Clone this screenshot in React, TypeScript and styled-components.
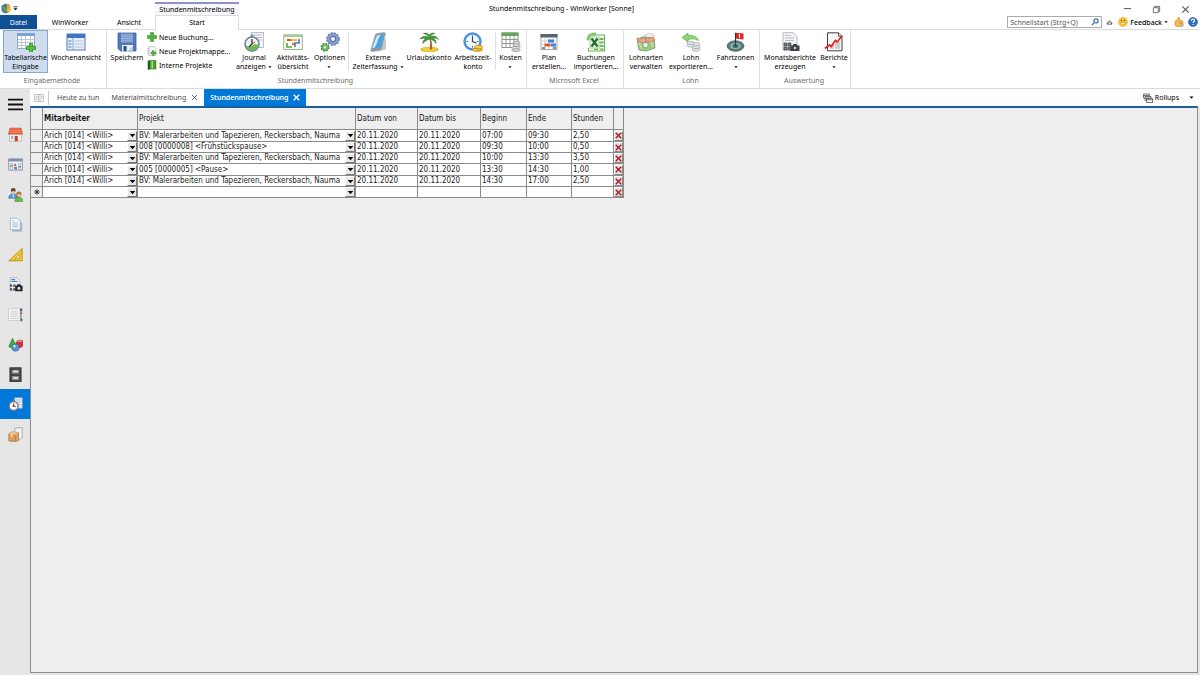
import React from "react";
import styled, { createGlobalStyle, css } from "styled-components";

const Global = createGlobalStyle`
  *, *::before, *::after { box-sizing: border-box; }
  html, body { margin: 0; padding: 0; }
  body {
    background: #fff;
    color: #000;
    font-family: "Noto Sans", "Open Sans", sans-serif;
    font-size: 7px;
    line-height: 9px;
  }
  button, input, select {
    font: inherit;
    color: inherit;
    margin: 0;
    padding: 0;
    border: 0;
    background: none;
    border-radius: 0;
  }
  svg { display: block; flex: none; }
`;

/* ---------- icons ---------- */

const shapes: Record<string, React.ReactNode> = {
  tableAdd: (
    <>
      <rect x="1.5" y="1.5" width="17" height="15" fill="#fff" stroke="#8fa6c4" />
      <rect x="1" y="1" width="18" height="3" fill="#7fa2d6" />
      <path d="M5.5 4v12M9.5 4v12M14.5 4v12M2 7.5h16M2 10.5h16M2 13.5h16" stroke="#a9bdd6" strokeWidth=".8" />
      <path d="M13.5 11.5h3v3h3v3h-3v3h-3v-3h-3v-3h3z" fill="#4fc236" stroke="#23801b" strokeWidth=".7" />
    </>
  ),
  week: (
    <>
      <rect x="1" y="2" width="18" height="16" fill="#e8effa" stroke="#5379b5" />
      <rect x="1" y="2" width="18" height="4" fill="#3f73c4" />
      <path d="M7 6v12" stroke="#88a5d4" />
      <path d="M2.5 9h3M2.5 12h3M2.5 15h3" stroke="#4d78bd" />
      <path d="M8.5 9h9M8.5 12h9M8.5 15h9" stroke="#b4c7e4" />
    </>
  ),
  save: (
    <>
      <path d="M1 1h18v18H3.5L1 16.500z" fill="#5579b8" stroke="#3c5f9f" strokeWidth=".8" />
      <rect x="4" y="1.500" width="12" height="9" fill="#7f9fd0" />
      <path d="M4 4h12M4 6.500h12M4 9h12" stroke="#9db7de" strokeWidth=".8" />
      <rect x="5" y="13" width="11" height="6" fill="#e9edf4" />
      <rect x="6.5" y="14" width="3" height="5" fill="#2b4a80" />
      <path d="M11 19l5-5v5z" fill="#b9c6da" />
    </>
  ),
  plus: <path d="M7 1h6v6h6v6h-6v6H7v-6H1V7h6z" fill="#4fb53c" stroke="#2a7a22" />,
  folderNew: (
    <>
      <path d="M4 1h10l4 4v14H4z" fill="#f4f6f9" stroke="#98a3b3" />
      <path d="M4 4H1.5v2H4M4 9H1.5v2H4M4 14H1.5v2H4" fill="none" stroke="#98a3b3" />
      <path d="M11 9h3v3h4v4h-4v3h-3v-3H8v-4h3z" fill="#4fb53c" stroke="#2a7a22" strokeWidth=".8" />
    </>
  ),
  book: (
    <>
      <path d="M2 2l4-1h12v17H6l-4 1z" fill="#4aa52e" stroke="#25631a" />
      <path d="M2 2l4-1v17l-4 1z" fill="#1f5a17" />
      <path d="M9 2h3v15H9z" fill="#a4dc7c" />
    </>
  ),
  journal: (
    <>
      <rect x="7.5" y=".5" width="12" height="15" fill="#f5f6f8" stroke="#a9b0ba" strokeWidth=".8" />
      <path d="M10 3h8M12 5.5h6M14 8h4" stroke="#b6bdc8" />
      <circle cx="8" cy="12" r="7" fill="#eef4f8" stroke="#6b7f93" strokeWidth="1.6" />
      <path d="M1.500 13.500a7 7 0 0 0 13.500-.5l-4-1-5 3z" fill="#6fb85b" />
      <path d="M8 7v5l-3 3" fill="none" stroke="#222" strokeWidth="1.2" />
      <path d="M8 12l3-2" stroke="#d22" />
      <rect x="6.5" y="2.5" width="3" height="2.5" fill="#7f8b99" />
    </>
  ),
  activity: (
    <>
      <rect x=".7" y="3" width="18.6" height="14.5" fill="#fdfdf6" stroke="#9fb58e" />
      <rect x=".7" y="2.500" width="18.6" height="2.5" fill="#a8c8a0" />
      <path d="M4 8h4" stroke="#d8402c" strokeWidth="1.8" />
      <path d="M8 8h6" stroke="#efb51f" strokeWidth="1.8" />
      <path d="M16 7v4h-4v4" fill="none" stroke="#3b7fd0" strokeWidth="1.6" />
      <path d="M4 11v4h5" fill="none" stroke="#50a83d" strokeWidth="1.6" />
      <path d="M9 12h3" stroke="#d8402c" strokeWidth="1.6" />
    </>
  ),
  gears: (
    <>
      <circle cx="13" cy="7" r="6" fill="#8ea3d1" stroke="#7088bd" strokeWidth="1.8" strokeDasharray="2 1.14" />
      <circle cx="13" cy="7" r="5.4" fill="#8ea3d1" stroke="#6a80b4" strokeWidth=".6" />
      <circle cx="13" cy="7" r="2.6" fill="#f4f6fb" stroke="#5b71a8" strokeWidth="1.2" />
      <circle cx="5" cy="15.3" r="3.6" fill="#58a84b" stroke="#35762c" strokeWidth="1.6" strokeDasharray="1.6 1.23" />
      <circle cx="5" cy="15.3" r="3.2" fill="#6bb75c" />
      <circle cx="5" cy="15.3" r="1.3" fill="#d4efcd" />
    </>
  ),
  phone: (
    <>
      <path d="M9 1.500l7-1c1 0 1.500.5 1.300 1.500L14 17c-.3 1-.8 1.500-1.800 1.600L4 19.500c-1 0-1.400-.6-1.200-1.500L7 3.500c.4-1.200 1-1.900 2-2z" fill="#8a95a3" stroke="#a9b3bf" strokeWidth=".8" />
      <path d="M9 3.500l6.500-.8-3.300 12.500-8 .8z" fill="#3ea6f0" />
      <path d="M9 3.500l4-.5c-4 4-3 8-6.500 12.800l-2.300.2z" fill="#d3ecfd" />
      <path d="M16 8l2-2v11l-4 2z" fill="#c3cad3" />
    </>
  ),
  palm: (
    <>
      <ellipse cx="10.5" cy="17.5" rx="9" ry="2.3" fill="#f3cf3d" stroke="#c99d1c" strokeWidth=".6" />
      <path d="M10 6c1.5 4 1.5 7 .5 11.5h2.7C13.5 13 12.8 9 11.5 6z" fill="#a5682a" />
      <path d="M10.500 6C7 3 3.500 4 .8 7c3-1 5-1 6 0-2 .5-3 2-3 4.500C6 9 8 8 10.500 7c3 .5 5 2 6.500 4.500 0-3-1-4.500-3-5 2-.8 4-.3 5.500 1C18 4 14 3 11.500 5 12 3 14 1.500 16 1.500c-3-1.200-5 0-5.500 2C9.500 1.500 7 .5 4.500 1.500 7.500 2 9 3.500 10.500 6z" fill="#3d9a32" stroke="#267020" strokeWidth=".5" />
    </>
  ),
  clock: (
    <>
      <circle cx="9.5" cy="9.5" r="8" fill="#f4f9fe" stroke="#4c92d6" strokeWidth="2.4" />
      <path d="M9.5 3.5v1.5M9.5 14v1.5M3.5 9.5H5M14 9.5h1.5" stroke="#567" />
      <path d="M9.5 4.5v5l4 1.5" fill="none" stroke="#274c79" strokeWidth="1.2" />
      <ellipse cx="15.5" cy="17.5" rx="4" ry="1.8" fill="#f2b91d" stroke="#b58210" strokeWidth=".7" />
      <ellipse cx="15.5" cy="15" rx="4" ry="1.8" fill="#f9d24a" stroke="#b58210" strokeWidth=".7" />
      <ellipse cx="12" cy="17.8" rx="2.6" ry="1.5" fill="#f9d24a" stroke="#b58210" strokeWidth=".7" />
    </>
  ),
  costs: (
    <>
      <rect x="1" y="1" width="16" height="14.5" fill="#fff" stroke="#8f9a8c" />
      <rect x=".5" y=".5" width="17" height="3.5" fill="#6aa35a" />
      <path d="M5 4v11M9 4v11M13 4v11M1 7.5h16M1 11.5h16" stroke="#858f82" strokeWidth=".9" />
      <g fill="#d7d9dc" stroke="#8a8e94" strokeWidth=".7">
        <ellipse cx="15" cy="18" rx="4.3" ry="1.6" />
        <ellipse cx="15" cy="15.5" rx="4" ry="1.6" />
        <ellipse cx="15.5" cy="13" rx="3.7" ry="1.6" />
        <ellipse cx="15.8" cy="10.5" rx="3.2" ry="1.5" />
      </g>
    </>
  ),
  plan: (
    <>
      <rect x="2" y="2.5" width="16" height="15" fill="#fff" stroke="#a1a8b3" />
      <rect x="1.5" y="2" width="17" height="3.5" fill="#5a6472" />
      <path d="M6 6v11M10 6v11M14 6v11M2 9h16M2 13h16" stroke="#c3c9d2" strokeWidth=".8" />
      <path d="M9 7.5h6v3H9z" fill="#3d86d6" />
      <path d="M5.5 11.5h6v3h-6z" fill="#e2552c" />
      <path d="M12 11.5h5v3h-5z" fill="#3d86d6" />
      <path d="M3 15h3v2H3zM14 15h3v2h-3z" fill="#7f9a70" />
    </>
  ),
  excel: (
    <>
      <path d="M6 3h12.5v16H2.5v-3" fill="#f4faf2" stroke="#6fb35c" strokeWidth="1.2" />
      <path d="M13.5 6h4v2h-4zM13.5 9.5h4v2h-4zM13.5 13h4v2h-4zM8 16.5h4v1.5H8zM13.5 16.5h4V18h-4z" fill="#6fb45a" />
      <path d="M4 5h9v11H4z" fill="#eaf5e6" stroke="#8cc47b" strokeWidth=".7" />
      <path d="M5.5 6.5l6 8M11.5 6.5l-6 8" stroke="#1f6b2c" strokeWidth="2.2" />
      <path d="M1 8c0-5 3-7.500 9-7l-1 2.200C5 3 3.500 4.500 3 8z" fill="#8ed072" stroke="#5ba743" strokeWidth=".5" />
    </>
  ),
  wageTypes: (
    <>
      <path d="M4 6l9-5 5 2-1 6z" fill="#f3f3ee" stroke="#b8c0b5" strokeWidth=".7" />
      <path d="M1 7l7-2 10 1 1 10-9 3-7-1z" fill="#9acb88" stroke="#6aa35d" strokeWidth=".8" />
      <path d="M1 6l5 1 3-2 3 2 5-2 2 3-5 2-3-1-3 2-6-2z" fill="#eda58b" stroke="#c8745a" strokeWidth=".6" />
      <circle cx="9.5" cy="13" r="2.8" fill="#e2efd8" stroke="#5f9a52" strokeWidth=".7" />
      <path d="M3 11l3 6M15 10l2 5" stroke="#f0c9b6" strokeWidth="1.5" />
      <path d="M9.5 5.5v5" stroke="#c8745a" />
    </>
  ),
  wageExport: (
    <>
      <path d="M1 5.500L7 1v2.500c5-.5 9 1 10.500 5C14.500 6.500 11 6.500 7 7.500V10z" fill="#8fd472" stroke="#5eab4c" strokeWidth=".7" />
      <g fill="#e6e8eb" stroke="#9a9fa6" strokeWidth=".7">
        <ellipse cx="15" cy="17.5" rx="4" ry="1.7" />
        <ellipse cx="15" cy="15" rx="4" ry="1.7" />
        <ellipse cx="15" cy="12.3" rx="4" ry="1.7" />
        <ellipse cx="9.5" cy="13.5" rx="3.5" ry="1.6" />
        <ellipse cx="9.5" cy="11" rx="3.5" ry="1.6" />
      </g>
    </>
  ),
  zones: (
    <>
      <ellipse cx="9.5" cy="14" rx="8.5" ry="5.3" fill="#56799a" stroke="#3d5a77" strokeWidth=".7" />
      <ellipse cx="9.5" cy="14" rx="5.8" ry="3.6" fill="#8fbf7d" stroke="#4a7440" strokeWidth=".6" />
      <ellipse cx="9.5" cy="14" rx="3" ry="1.9" fill="#3d5f93" />
      <path d="M9.5 14V.8" stroke="#333" strokeWidth="1.1" />
      <path d="M10 .8l7.5.8v6l-7.5-.8z" fill="#d8262a" />
      <path d="M13.5 2.3v4M12.5 3l1-.8" stroke="#fff" />
    </>
  ),
  monthly: (
    <>
      <path d="M3 .7h10l4 4V18H3z" fill="#f2f3f5" stroke="#a6abb3" strokeWidth=".8" />
      <path d="M5 3.5h6M5 6h9M5 8.5h9" stroke="#b9bec6" strokeWidth="1" />
      <path d="M4 11h3v3H4zM8 11h3v3H8zM4 15h3v3H4zM8 15h3v3H8z" fill="#777d86" stroke="#3f444c" strokeWidth=".7" />
      <path d="M10.5 13.5h2l1-1.5h3l1 1.5h2v5.5h-9z" fill="#3e4248" />
      <circle cx="15" cy="16" r="1.8" fill="#d4d9df" stroke="#111" strokeWidth=".6" />
    </>
  ),
  reports: (
    <>
      <path d="M3.5.8h11l3.5 3.5v14.5H3.5z" fill="#f6f7f9" stroke="#3b3f46" strokeWidth="1" />
      <path d="M14.5.8v3.5H18" fill="#cfd4dc" stroke="#3b3f46" strokeWidth=".8" />
      <path d="M6 12h4v5H6zM11 10h5v7h-5z" fill="#dcc9cb" />
      <path d="M.8 16.500l4.500-3.500 2 1.500 4-6 2 1.500 5-6.500" fill="none" stroke="#e01f1f" strokeWidth="1.6" />
    </>
  ),
  house: (
    <>
      <path d="M2 8.5h16V19H2z" fill="#f1efec" stroke="#a9a29a" strokeWidth=".7" />
      <path d="M2.5 1.5h15l2 8H.5z" fill="#ea6440" stroke="#b8452a" strokeWidth=".7" />
      <path d="M2 5h16M1.5 7.5h17" stroke="#f7a284" strokeWidth=".7" />
      <path d="M9 12h4v7H9z" fill="#b8452a" />
      <path d="M4 12h3v4H4z" fill="#9fb2c5" />
    </>
  ),
  calendar: (
    <>
      <rect x="1" y="2.5" width="18" height="15" fill="#f3f5f8" stroke="#76859a" />
      <rect x="1" y="2.5" width="18" height="3.5" fill="#8092ac" />
      <path d="M3 8.5h3v8H3zM14 8.5h3v8h-3z" fill="none" stroke="#9fadc0" />
      <path d="M8 9h3v3H8z" fill="#cb6b5b" />
      <path d="M8 13h4v3.5H8zM3 11h3v2H3zM14 12h3v2h-3z" fill="#73839b" />
    </>
  ),
  people: (
    <>
      <circle cx="7" cy="4.5" r="3.3" fill="#6d4427" />
      <path d="M5 5.5h4.5v2.3L7.5 9 5 7.5z" fill="#f0c59c" />
      <path d="M1 15c0-4 2-6 6-6s6 2 6 6z" fill="#5b8fd6" stroke="#3c69a8" strokeWidth=".7" />
      <path d="M7 9v5" stroke="#fff" strokeWidth="1.3" />
      <circle cx="14.5" cy="9.5" r="3.5" fill="#b0743a" />
      <path d="M12.7 9.5H17v2.3l-2.2 1.4-2.1-1.4z" fill="#f5d0aa" />
      <path d="M9 19.3c0-4 2-5.8 5.5-5.8s5 1.8 5 5.8z" fill="#62bd49" stroke="#37862a" strokeWidth=".7" />
    </>
  ),
  doc: (
    <>
      <path d="M5.5 4h9l4.5 4v11.5H5.5z" fill="#a8bccf" />
      <path d="M3 1.5h9.5l4 4V17H3z" fill="#f1f6fb" stroke="#8ba4bd" strokeWidth=".9" />
      <path d="M5.5 5h3M5.5 8h8M5.5 10.5h8M5.5 13h8" stroke="#96aec6" />
    </>
  ),
  ruler: (
    <>
      <path d="M19 1.5v17H1z" fill="#f5c92c" stroke="#a8821a" strokeWidth=".9" />
      <path d="M15.5 9.5v5.5H9.5z" fill="#e9e9e9" stroke="#a8821a" strokeWidth=".8" />
      <path d="M4 17v1M7 17v1M10 17v1M13 17v1M17.5 5H19M17.5 8H19" stroke="#7d5f10" strokeWidth=".7" />
    </>
  ),
  qrcam: (
    <>
      <path d="M3 1h9l4 4v12H3z" fill="#e9eef5" stroke="#98a6b8" strokeWidth=".8" />
      <path d="M4.5 3.5h5M4.5 6h8" stroke="#4c7ebc" strokeWidth="1.6" />
      <path d="M2.5 10h3v3h-3zM7 10h3v3H7zM2.5 15h3v3h-3zM7 15h3v3H7z" fill="#4a4f57" />
      <path d="M9.5 11.5h2l1-2h4l1 2h2V19h-10z" fill="#26292e" />
      <circle cx="14.5" cy="15" r="2.5" fill="#dfe4ea" stroke="#000" strokeWidth=".7" />
    </>
  ),
  list: (
    <>
      <rect x="1" y="2.5" width="15" height="15.5" fill="#fbfbfb" stroke="#b6bac0" strokeWidth=".8" />
      <path d="M3 5.5h11M3 8h11M3 10.5h11M3 13h11M3 15.5h11" stroke="#b3b8bf" strokeWidth=".9" />
      <path d="M16 2h3v4h-3z" fill="#4d5e7d" />
      <path d="M16 7h3v3h-3z" fill="#a5655f" />
      <path d="M16 11h2.5v3H16z" fill="#86919f" />
      <path d="M16.5 15H19v4h-2.5z" fill="#4d5e7d" />
    </>
  ),
  solids: (
    <>
      <path d="M6 1.5L11.5 13C8 15.5 3.5 15 1 12.5z" fill="#3fae3a" stroke="#22761f" strokeWidth=".7" />
      <path d="M11 6.5l2-2h6.5v7.5l-2 2H11z" fill="#d92c30" stroke="#96191c" strokeWidth=".7" />
      <path d="M11 6.5l2-2h6.5l-2 2z" fill="#f58a82" />
      <circle cx="10" cy="14" r="5" fill="#5b92d4" stroke="#2d5b99" strokeWidth=".7" />
      <circle cx="8.5" cy="12.3" r="1.7" fill="#cfe3f8" />
    </>
  ),
  cabinet: (
    <>
      <rect x="2.5" y="1" width="15" height="18.5" fill="#4a4c50" stroke="#2c2d30" />
      <rect x="4.5" y="3" width="11" height="6.5" fill="#8b8d91" stroke="#2c2d30" strokeWidth=".8" />
      <rect x="4.5" y="11.5" width="11" height="6.5" fill="#8b8d91" stroke="#2c2d30" strokeWidth=".8" />
      <path d="M7 5h6v2H7zM7 13.5h6v2H7z" fill="#f2f2f2" />
    </>
  ),
  time: (
    <>
      <path d="M9 1h10v14H9z" fill="#e6ebf1" stroke="#a5b6c8" strokeWidth=".8" />
      <path d="M11 4h6M13 7h4M14 10h3" stroke="#9fb2c7" />
      <circle cx="7.5" cy="12" r="6" fill="#f6f8fa" stroke="#6d7b8a" strokeWidth="1.8" />
      <path d="M7.5 8.5V12l2.8 1" fill="none" stroke="#333" strokeWidth="1.2" />
      <circle cx="7.5" cy="12" r="1.4" fill="#c93535" />
      <path d="M6 3.5h3v2H6z" fill="#6d7b8a" />
    </>
  ),
  parcel: (
    <>
      <path d="M9 1.5l10-1v14l-4 2-6-1z" fill="#edf0f4" stroke="#8f98a4" strokeWidth=".9" />
      <path d="M1 9l4-2.5 9 1V18l-4 1.8L1 18.5z" fill="#dca05c" stroke="#a26a2c" strokeWidth=".8" />
      <path d="M1 9l8.5 1.2L14 7.5l-9-1z" fill="#f3c88f" />
      <path d="M9.5 10.2V19.5" stroke="#a26a2c" strokeWidth=".8" />
      <path d="M4 9.5l1.8.3V13L4 12.7z" fill="#fff0d8" />
    </>
  ),
  app: (
    <>
      <path d="M1 5l7-4 6 3v13l-7 2-6-4z" fill="#3d79b8" />
      <path d="M8 3l6-1v14l-5 3z" fill="#1f4c84" />
      <path d="M10 2l7 2v9l-7 5z" fill="#e9ad27" />
      <path d="M3 8l5 8 3-1-4-9z" fill="#66a83e" />
      <path d="M12 12h7l-4 7z" fill="#eecb55" />
    </>
  ),
  caret: <path d="M2 6h16l-8 9z" fill="currentColor" />,
  overflow: <path d="M2 2h16v3H2zM2 9h16l-8 8z" fill="currentColor" />,
  minimize: <path d="M2 8h16" stroke="currentColor" strokeWidth="2.2" />,
  restore: <path d="M3 6h11v11H3zM6 6V3h11v11h-3" fill="none" stroke="currentColor" strokeWidth="1.8" />,
  cross: <path d="M3 3l14 14M17 3L3 17" stroke="currentColor" strokeWidth="2.400" />,
  crossBold: <path d="M2 2l16 16M18 2L2 18" stroke="currentColor" strokeWidth="3.8" />,
  search: <path d="M12.5 2a5 5 0 1 1 0 10.5 5 5 0 0 1 0-10.5M9 11l-7 7" fill="none" stroke="#2b5f9f" strokeWidth="2.8" />,
  collapse: <path d="M3 14V11l7-6 7 6v3l-7-5zM3 15h14" fill="none" stroke="#444" strokeWidth="2" />,
  smile: (
    <>
      <circle cx="10" cy="10" r="9" fill="#fbc92f" stroke="#d99a13" />
      <path d="M5 11c1 5 9 5 10 0z" fill="#fff" stroke="#b5780f" />
      <circle cx="7" cy="7" r="1.4" fill="#6b4307" />
      <circle cx="13" cy="7" r="1.4" fill="#6b4307" />
    </>
  ),
  thumb: (
    <>
      <path d="M2 8l4-1 2-6h3v6h5l2 2v8l-4 2H6l-4-2z" fill="#f5b84d" stroke="#d18f2c" strokeWidth="1.2" />
      <path d="M10 10h7M10 13h7" stroke="#d18f2c" />
      <path d="M14 14h5v5h-5z" fill="#a8b1bd" />
    </>
  ),
  help: (
    <>
      <circle cx="10" cy="10" r="9" fill="#2a6fc0" stroke="#174a8a" />
      <path d="M6.8 7.500c0-4.500 6.700-4 6.400-.4-.2 2-3 2.200-3 5" fill="none" stroke="#fff" strokeWidth="2.3" />
      <path d="M9 13.8h2.4v2.4H9z" fill="#fff" />
    </>
  ),
  rollups: (
    <>
      <path d="M1 2h12v3H1zM1 5v5h3M4 7h12v3H4zM4 10v5h3" fill="#fff" stroke="#444" strokeWidth="1.5" />
      <path d="M7 11h12v8H7zM7 13.5h12" fill="#fff" stroke="#444" strokeWidth="1.5" />
    </>
  ),
  panes: (
    <>
      <path d="M1 3h18v14H1z" fill="#fafafa" stroke="#b5b5b5" strokeWidth="1.5" />
      <path d="M9 3v14M12 3v14M3 7h4M3 10h4M3 13h4M14 7h3M14 10h3" stroke="#b5b5b5" strokeWidth="1.5" />
    </>
  ),
  menu: <path d="M0 3.5h20M0 10h20M0 16.5h20" stroke="#111" strokeWidth="2.6" />,
  star: <path d="M10 3v14M3 10h14M5 5l10 10M15 5L5 15" stroke="#222" strokeWidth="2" />,
};

const Icon = ({ name, size = 20 }: { name: string; size?: number }) => (
  <svg width={size} height={size} viewBox="0 0 20 20" aria-hidden="true">
    {shapes[name]}
  </svg>
);

/* ---------- window frame ---------- */

const Window = styled.div`
  display: flex;
  flex-direction: column;
  min-height: 100vh;
`;

const TitleBar = styled.header`
  display: grid;
  grid-template-columns: 155px 84px 1fr auto;
  height: 15px;
`;

const QuickAccess = styled.div`
  display: flex;
  align-items: center;
  gap: 1px;
  padding-left: 1px;
`;

const ContextHeader = styled.div`
  margin-top: 2px;
  border-top: 2px solid #8f94c6;
  background: #f7f7fc;
  line-height: 12px;
  text-align: center;
  white-space: nowrap;
`;

const WindowTitle = styled.h1`
  margin: 0;
  padding-left: 250px;
  font-size: 7px;
  font-weight: 400;
  line-height: 17px;
`;

const WindowControls = styled.div`
  display: flex;
  align-items: center;
  gap: 20px;
  padding: 1px 10px 0 0;
  color: #555;
`;

const IconButton = styled.button`
  display: flex;
  align-items: center;
  justify-content: center;
`;

const MenuBar = styled.nav`
  display: flex;
  height: 15px;
  border-bottom: 1px solid #dcdcdc;
`;

const MenuTab = styled.button<{ $width: number; $kind?: "file" | "active" }>`
  width: ${(p) => p.$width}px;
  height: 14px;
  text-align: center;
  ${(p) =>
    p.$kind === "file" &&
    css`
      background: #0f4f94;
      color: #fff;
    `}
  ${(p) =>
    p.$kind === "active" &&
    css`
      height: 15px;
      padding-bottom: 2px;
      border: 1px solid #dcdcdc;
      border-bottom: 0;
      background: #fff;
    `}
`;

const MenuTools = styled.div`
  display: flex;
  align-items: center;
  gap: 4px;
  margin-left: auto;
  padding-right: 2px;
`;

const SearchBox = styled.label`
  display: flex;
  align-items: center;
  width: 95px;
  height: 12px;
  padding: 0 2px;
  border: 1px solid #ababab;
  input {
    flex: 1;
    min-width: 0;
    height: 10px;
    outline: 0;
  }
  input::placeholder {
    color: #555;
    opacity: 1;
  }
`;

const Feedback = styled.button`
  display: flex;
  align-items: center;
  gap: 2px;
  padding: 0 2px 0 1px;
  font-weight: 500;
`;

/* ---------- ribbon ---------- */

const Ribbon = styled.div`
  display: flex;
  height: 59px;
  border-bottom: 1px solid #dcdcdc;
`;

const Group = styled.section`
  display: flex;
  flex-direction: column;
  border-right: 1px solid #e0e0e0;
  padding: 0 2px 0 0;
`;

const GroupItems = styled.div<{ $indent: number }>`
  display: flex;
  height: 43px;
  padding-left: ${(p) => p.$indent}px;
`;

const GroupLabel = styled.h2`
  margin: 0;
  padding-top: 3px;
  color: #6c6c6c;
  font-size: 7px;
  font-weight: 400;
  line-height: 10px;
  text-align: center;
`;

const BigButton = styled.button<{ $width: number; $on?: boolean }>`
  display: flex;
  flex-direction: column;
  align-items: center;
  gap: 1px;
  width: ${(p) => p.$width}px;
  padding-top: 2px;
  white-space: nowrap;
  ${(p) =>
    p.$on &&
    css`
      background: #cfdcee;
      box-shadow: inset 0 0 0 1px #86a8d2;
    `}
`;

const BigLabel = styled.span`
  display: flex;
  flex-direction: column;
  align-items: center;
  line-height: 9px;
`;

const LabelLine = styled.span`
  display: flex;
  align-items: center;
  gap: 2px;
  min-height: 9px;
`;

const Divider = styled.span`
  flex: none;
  width: 1px;
  height: 38px;
  margin: 2px 1px;
  background: #e0e0e0;
`;

const SmallColumn = styled.div`
  display: flex;
  flex-direction: column;
  width: 87px;
`;

const SmallButton = styled.button`
  display: flex;
  align-items: center;
  gap: 2px;
  height: 14px;
  white-space: nowrap;
`;

type Action = { icon: string; width: number; lines: string[]; caret?: boolean; on?: boolean };
type Entry = Action | "divider" | "small";

const groups: { label: string; indent: number; items: Entry[] }[] = [
  {
    label: "Eingabemethode",
    indent: 3,
    items: [
      { icon: "tableAdd", width: 45, lines: ["Tabellarische", "Eingabe"], on: true },
      { icon: "week", width: 56, lines: ["Wochenansicht"] },
    ],
  },
  {
    label: "Stundenmitschreibung",
    indent: 0,
    items: [
      { icon: "save", width: 40, lines: ["Speichern"] },
      "small",
      { icon: "journal", width: 40, lines: ["Journal", "anzeigen"], caret: true },
      { icon: "activity", width: 38, lines: ["Aktivitäts-", "übersicht"] },
      { icon: "gears", width: 35, lines: ["Optionen", ""], caret: true },
      "divider",
      { icon: "phone", width: 56, lines: ["Externe", "Zeiterfassung"], caret: true },
      { icon: "palm", width: 46, lines: ["Urlaubskonto"] },
      { icon: "clock", width: 42, lines: ["Arbeitszeit-", "konto"] },
      "divider",
      { icon: "costs", width: 27, lines: ["Kosten", ""], caret: true },
    ],
  },
  {
    label: "Microsoft Excel",
    indent: 0,
    items: [
      { icon: "plan", width: 44, lines: ["Plan", "erstellen..."] },
      { icon: "excel", width: 50, lines: ["Buchungen", "importieren..."] },
    ],
  },
  {
    label: "Lohn",
    indent: 0,
    items: [
      { icon: "wageTypes", width: 44, lines: ["Lohnarten", "verwalten"] },
      { icon: "wageExport", width: 46, lines: ["Lohn", "exportieren..."] },
      { icon: "zones", width: 43, lines: ["Fahrtzonen", ""], caret: true },
    ],
  },
  {
    label: "Auswertung",
    indent: 0,
    items: [
      { icon: "monthly", width: 60, lines: ["Monatsberichte", "erzeugen"] },
      { icon: "reports", width: 28, lines: ["Berichte", ""], caret: true },
    ],
  },
];

const smallActions = [
  { icon: "plus", label: "Neue Buchung..." },
  { icon: "folderNew", label: "Neue Projektmappe..." },
  { icon: "book", label: "Interne Projekte" },
];

const RibbonEntry = ({ entry }: { entry: Entry }) => {
  if (entry === "divider") return <Divider />;
  if (entry === "small")
    return (
      <SmallColumn>
        {smallActions.map((a) => (
          <SmallButton key={a.label}>
            <Icon name={a.icon} size={10} />
            {a.label}
          </SmallButton>
        ))}
      </SmallColumn>
    );
  return (
    <BigButton $width={entry.width} $on={entry.on}>
      <Icon name={entry.icon} />
      <BigLabel>
        {entry.lines.map((line, i) => (
          <LabelLine key={i}>
            {line}
            {entry.caret && i === entry.lines.length - 1 && <Icon name="caret" size={4} />}
          </LabelLine>
        ))}
      </BigLabel>
    </BigButton>
  );
};

/* ---------- body ---------- */

const Body = styled.div`
  display: flex;
  flex: 1;
  background: #e6e6e6;
`;

const Sidebar = styled.nav`
  flex: none;
  width: 30px;
`;

const SideButton = styled.button<{ $on?: boolean }>`
  display: flex;
  align-items: center;
  justify-content: center;
  width: 30px;
  height: 30px;
  background: ${(p) => (p.$on ? "#0078d7" : "transparent")};
`;

const Main = styled.main`
  display: flex;
  flex: 1;
  flex-direction: column;
  min-width: 0;
  padding-bottom: 2px;
`;

const TabStrip = styled.div`
  display: flex;
  align-items: stretch;
  height: 17px;
  background: #fff;
`;

const PaneToggle = styled(IconButton)`
  width: 19px;
  margin: 2px 2px 1px 0;
  border-right: 1px solid #c9c9c9;
`;

const DocTab = styled.div<{ $on?: boolean }>`
  display: flex;
  align-items: center;
  gap: 5px;
  padding: 0 6px;
  color: ${(p) => (p.$on ? "#fff" : "#4a4a4a")};
  background: ${(p) => (p.$on ? "#0078d7" : "transparent")};
  font-weight: ${(p) => (p.$on ? 600 : 400)};
  white-space: nowrap;
`;

const RollupButton = styled.button`
  display: flex;
  align-items: center;
  gap: 2px;
  margin-left: auto;
  padding-right: 6px;
  svg:last-child {
    margin-left: 8px;
  }
`;

const Workspace = styled.div`
  flex: 1;
  margin-right: 2px;
  border: 1px solid #8e8e8e;
  border-top: 2px solid #1c5f9f;
  background: #eee;
`;

const Grid = styled.table`
  width: 593px;
  table-layout: fixed;
  border-collapse: separate;
  border-spacing: 0;
  color: #1a1a1a;
  font-family: "DejaVu Sans Condensed", "Noto Sans", sans-serif;
  font-size: 8px;
`;

const HeadCell = styled.th<{ $width: number; $bold?: boolean }>`
  width: ${(p) => p.$width}px;
  height: 22px;
  padding: 0 1px;
  border-right: 1px solid #8a8a8a;
  border-bottom: 1px solid #8a8a8a;
  font-weight: ${(p) => (p.$bold ? 700 : 400)};
  text-align: left;
  white-space: nowrap;
`;

const Row = styled.tr`
  height: 11px;
  &:nth-child(3n + 1) {
    height: 12px;
  }
`;

const Cell = styled.td<{ $plain?: boolean }>`
  height: inherit;
  padding: 0;
  border-right: 1px solid #8a8a8a;
  border-bottom: 1px solid #8a8a8a;
  background: ${(p) => (p.$plain ? "#eee" : "#fff")};
  line-height: 0;
`;

const fieldText = css`
  display: block;
  width: 100%;
  height: 10px;
  padding-left: 1px;
  line-height: 10px;
  outline: 0;
`;

const Field = styled.input`
  ${fieldText}
`;

const Picker = styled.span`
  display: flex;
  height: 10px;
`;

const Choice = styled.select`
  ${fieldText}
  flex: 1;
  min-width: 0;
  appearance: none;
`;

const Drop = styled.span`
  display: flex;
  flex: none;
  align-items: center;
  justify-content: center;
  width: 10px;
  border: 1px solid #fff;
  border-right-color: #777;
  border-bottom-color: #777;
  background: #e9e9e9;
  color: #000;
  pointer-events: none;
`;

const Marker = styled.span`
  display: flex;
  justify-content: center;
`;

const DeleteButton = styled.button`
  display: flex;
  align-items: center;
  justify-content: center;
  width: 9px;
  height: 10px;
  border: 1px solid #fff;
  border-right-color: #888;
  border-bottom-color: #888;
  background: #e4dede;
  color: #b3141c;
`;

const sideItems = [
  "menu",
  "house",
  "calendar",
  "people",
  "doc",
  "ruler",
  "qrcam",
  "list",
  "solids",
  "cabinet",
  "time",
  "parcel",
];

const sideNames = [
  "Menü",
  "Start",
  "Kalender",
  "Personen",
  "Dokumente",
  "Aufmaß",
  "Scan",
  "Listen",
  "Artikel",
  "Archiv",
  "Zeiten",
  "Lager",
];

const columns = [
  { label: "Mitarbeiter", width: 95, bold: true },
  { label: "Projekt", width: 218 },
  { label: "Datum von", width: 62 },
  { label: "Datum bis", width: 63 },
  { label: "Beginn", width: 46 },
  { label: "Ende", width: 45 },
  { label: "Stunden", width: 42 },
];

const malen = "BV: Malerarbeiten und Tapezieren, Reckersbach, Nauma";
const willi = "Arich [014] <Willi>";
const tag = "20.11.2020";

const rows = [
  [willi, malen, tag, tag, "07:00", "09:30", "2,50"],
  [willi, "008 [0000008] <Frühstückspause>", tag, tag, "09:30", "10:00", "0,50"],
  [willi, malen, tag, tag, "10:00", "13:30", "3,50"],
  [willi, "005 [0000005] <Pause>", tag, tag, "13:30", "14:30", "1,00"],
  [willi, malen, tag, tag, "14:30", "17:00", "2,50"],
  ["", "", "", "", "", "", ""],
];

export default function App() {
  return (
    <Window>
      <Global />
      <TitleBar>
        <QuickAccess>
          <Icon name="app" size={11} />
          <IconButton aria-label="Schnellzugriff anpassen">
            <Icon name="overflow" size={5} />
          </IconButton>
        </QuickAccess>
        <ContextHeader>Stundenmitschreibung</ContextHeader>
        <WindowTitle>Stundenmitschreibung - WinWorker [Sonne]</WindowTitle>
        <WindowControls>
          <IconButton aria-label="Minimieren"><Icon name="minimize" size={9} /></IconButton>
          <IconButton aria-label="Wiederherstellen"><Icon name="restore" size={9} /></IconButton>
          <IconButton aria-label="Schließen"><Icon name="cross" size={9} /></IconButton>
        </WindowControls>
      </TitleBar>
      <MenuBar>
        <MenuTab $width={37} $kind="file">Datei</MenuTab>
        <MenuTab $width={66}>WinWorker</MenuTab>
        <MenuTab $width={52}>Ansicht</MenuTab>
        <MenuTab $width={84} $kind="active">Start</MenuTab>
        <MenuTools>
          <SearchBox>
            <input type="text" aria-label="Schnellstart" placeholder="Schnellstart (Strg+Q)" />
            <Icon name="search" size={8} />
          </SearchBox>
          <IconButton aria-label="Menüband reduzieren"><Icon name="collapse" size={7} /></IconButton>
          <Feedback>
            <Icon name="smile" size={10} />
            Feedback
            <Icon name="caret" size={4} />
          </Feedback>
          <IconButton aria-label="Gefällt mir"><Icon name="thumb" size={10} /></IconButton>
          <IconButton aria-label="Hilfe"><Icon name="help" size={10} /></IconButton>
        </MenuTools>
      </MenuBar>
      <Ribbon>
        {groups.map((g) => (
          <Group key={g.label}>
            <GroupItems $indent={g.indent}>
              {g.items.map((item, i) => (
                <RibbonEntry key={i} entry={item} />
              ))}
            </GroupItems>
            <GroupLabel>{g.label}</GroupLabel>
          </Group>
        ))}
      </Ribbon>
      <Body>
        <Sidebar>
          {sideItems.map((name, i) => (
            <SideButton key={name} $on={name === "time"} aria-label={sideNames[i]}>
              <Icon name={name} size={15} />
            </SideButton>
          ))}
        </Sidebar>
        <Main>
          <TabStrip>
            <PaneToggle aria-label="Bereiche"><Icon name="panes" size={10} /></PaneToggle>
            <DocTab>Heute zu tun</DocTab>
            <DocTab>
              Materialmitschreibung
              <IconButton aria-label="Materialmitschreibung schließen"><Icon name="cross" size={7} /></IconButton>
            </DocTab>
            <DocTab $on>
              Stundenmitschreibung
              <IconButton aria-label="Stundenmitschreibung schließen"><Icon name="crossBold" size={7} /></IconButton>
            </DocTab>
            <RollupButton>
              <Icon name="rollups" size={10} />
              Rollups
              <Icon name="caret" size={5} />
            </RollupButton>
          </TabStrip>
          <Workspace>
            <Grid>
              <thead>
                <tr>
                  <HeadCell $width={12} />
                  {columns.map((c) => (
                    <HeadCell key={c.label} $width={c.width} $bold={c.bold}>{c.label}</HeadCell>
                  ))}
                  <HeadCell $width={10} />
                </tr>
              </thead>
              <tbody>
                {rows.map((row, r) => (
                  <Row key={r}>
                    <Cell $plain>
                      {r === rows.length - 1 && <Marker><Icon name="star" size={8} /></Marker>}
                    </Cell>
                    {row.map((value, c) => (
                      <Cell key={c}>
                        {c < 2 ? (
                          <Picker>
                            <Choice aria-label={`${columns[c].label} ${r + 1}`} defaultValue={value}>
                              <option value={value}>{value}</option>
                            </Choice>
                            <Drop><Icon name="caret" size={7} /></Drop>
                          </Picker>
                        ) : (
                          <Field aria-label={`${columns[c].label} ${r + 1}`} defaultValue={value} />
                        )}
                      </Cell>
                    ))}
                    <Cell $plain>
                      <DeleteButton aria-label={`Zeile ${r + 1} löschen`}>
                        <Icon name="crossBold" size={7} />
                      </DeleteButton>
                    </Cell>
                  </Row>
                ))}
              </tbody>
            </Grid>
          </Workspace>
        </Main>
      </Body>
    </Window>
  );
}
